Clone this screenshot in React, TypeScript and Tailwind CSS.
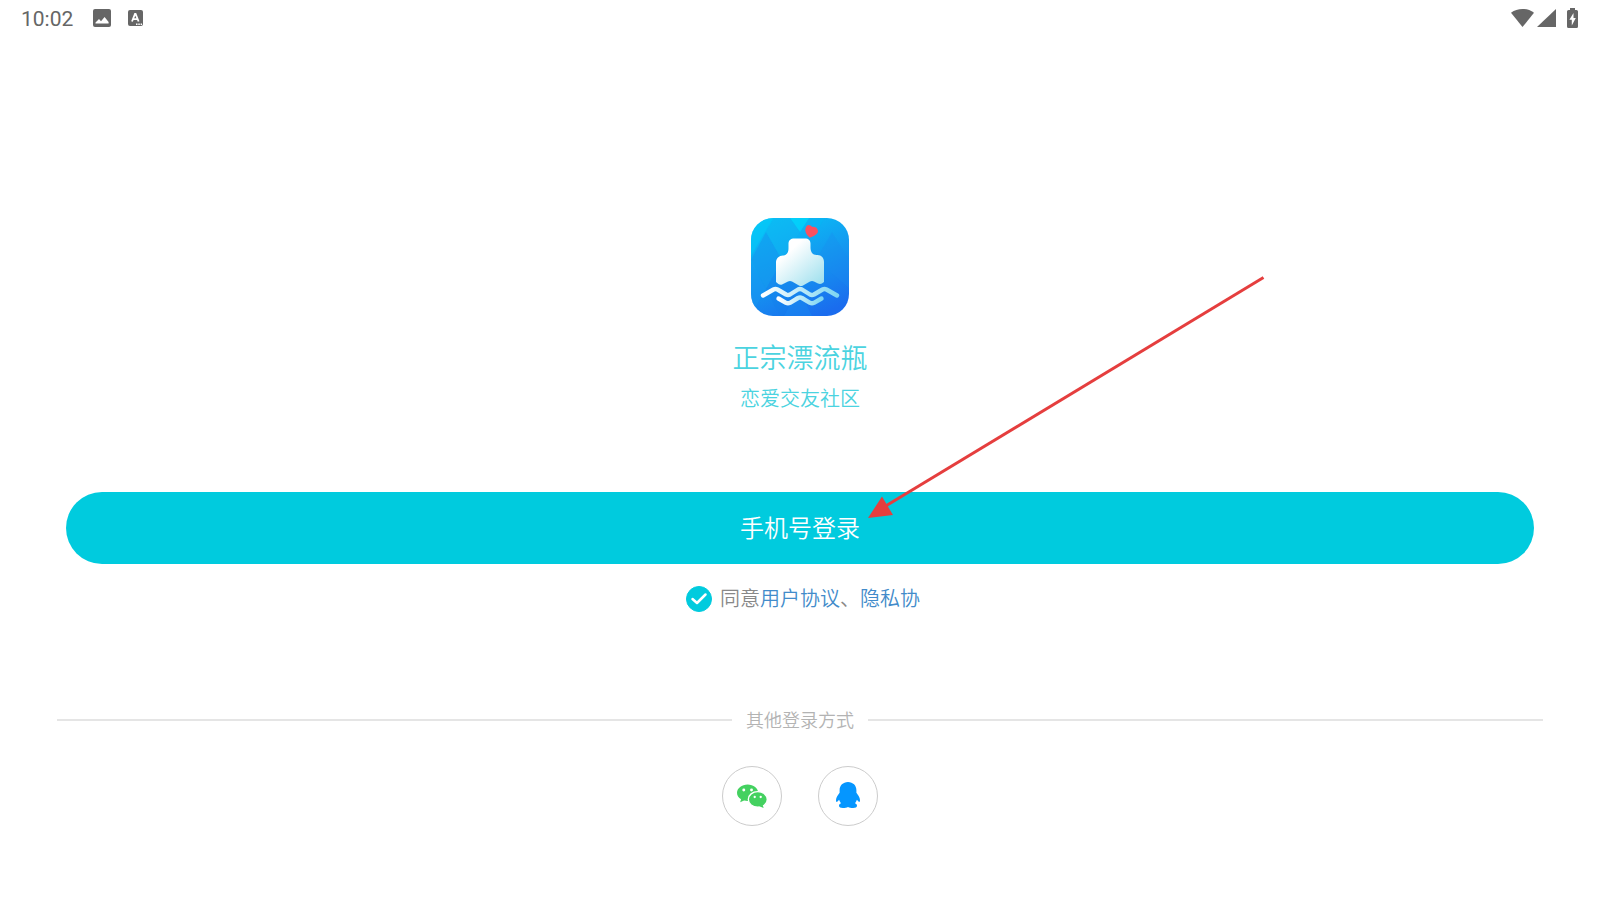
import { useState } from 'react';

function StatusBar() {
  return (
    <header className="flex h-9 items-center justify-between pl-[21px] pr-[22px] text-[#666666]">
      <div className="flex items-center">
        <span className="w-[55px] pt-0.5 font-[Roboto,sans-serif] text-[21px] font-normal leading-6">10:02</span>
        <svg className="ml-[17px] h-[18px] w-[18px]" viewBox="0 0 18 18" aria-hidden="true">
          <rect width="18" height="18" rx="2" fill="currentColor" />
          <path d="M2.5 14.5v-1l3.5-3.5 2 2.2 3.6-4.2 4 5v1.5z" fill="#fff" />
        </svg>
        <svg className="ml-[17px] h-4 w-[15px]" viewBox="0 0 15 16" aria-hidden="true">
          <rect width="15" height="16" rx="2" fill="currentColor" />
          <path
            d="M4 11.5 7 3.8h.6l3 7.7M5.2 9.2h4.2"
            fill="none"
            stroke="#fff"
            strokeWidth="1.8"
          />
          <path d="M8 14.3h1.5M10.3 14.3h1.5M12.6 14.3H14" stroke="#fff" strokeWidth="1.4" />
        </svg>
      </div>
      <div className="flex items-center">
        <svg className="h-[18px] w-[23px]" viewBox="0 0 23 18" aria-hidden="true">
          <path d="M0 3.8C3.4 1.2 7.2 0 11.5 0S19.6 1.2 23 3.8L11.5 18z" fill="currentColor" />
        </svg>
        <svg className="ml-[3px] h-[18px] w-[19px]" viewBox="0 0 19 18" aria-hidden="true">
          <path d="M0 18 19 0v18z" fill="currentColor" />
        </svg>
        <svg className="ml-[11px] h-5 w-[11px]" viewBox="0 0 11 20" aria-hidden="true">
          <path
            d="M3 0h5v2h1.5A1.5 1.5 0 0 1 11 3.5v15A1.5 1.5 0 0 1 9.5 20h-8A1.5 1.5 0 0 1 0 18.5v-15A1.5 1.5 0 0 1 1.5 2H3z"
            fill="currentColor"
          />
          <path d="M6.5 5 2.4 11.8h2.4V17.5L8.800 10H6.500z" fill="#fff" />
        </svg>
      </div>
    </header>
  );
}

function AppLogo() {
  return (
    <svg className="h-[98px] w-[98px]" viewBox="0 0 98 98" role="img" aria-label="正宗漂流瓶">
      <defs>
        <linearGradient id="sea" x1="0.25" y1="0" x2="0.7" y2="1">
          <stop offset="0" stopColor="#08c2f6" />
          <stop offset="0.5" stopColor="#1498f0" />
          <stop offset="1" stopColor="#1a6cee" />
        </linearGradient>
        <linearGradient id="glass" x1="0.1" y1="0.1" x2="0.9" y2="1">
          <stop offset="0.2" stopColor="#ffffff" />
          <stop offset="1" stopColor="#9fe0ee" />
        </linearGradient>
        <linearGradient id="wave" x1="0" y1="0" x2="1" y2="0">
          <stop offset="0" stopColor="#ffffff" />
          <stop offset="1" stopColor="#7fd6f2" />
        </linearGradient>
        <clipPath id="tile">
          <rect width="98" height="98" rx="22" />
        </clipPath>
      </defs>
      <g clipPath="url(#tile)">
        <rect width="98" height="98" fill="url(#sea)" />
        <path d="M0 0h22L0 38z" fill="#05c8f8" opacity="0.6" />
        <path d="m15 14 16 28-16 29L0 42z" fill="#1498ee" opacity="0.6" />
        <path d="M39 0h19l-9 14z" fill="#00d8fc" opacity="0.7" />
        <path d="M15 14 23 0h16l10 14-18 28z" fill="#10b4f2" opacity="0.5" />
        <path d="M65 14 58 0h16z" fill="#08b6f4" opacity="0.5" />
        <path d="m81 14 17 28v28L65 42z" fill="#1a8cf0" opacity="0.3" />
        <path d="M0 44 15 71 0 97z" fill="#1596f2" opacity="0.5" />
        <path d="m15 71 16-29 17 29-16 27H29z" fill="#1580ec" opacity="0.4" />
        <path d="m48 71-15 27h28z" fill="#188cf0" opacity="0.4" />
      </g>
      <path
        d="M44 20.5h10c3.500 0 5.500 2 5.500 5v4c0 4.500 2 7.500 6 7.500h1c4 0 6.500 3 6.500 7V64c-2 2-4 2.500-6 1.500l-4-2q-2-1-4 0l-7 4q-2 1-4 0l-7-4q-2-1-4 0l-6 3c-2 .8-4-.5-6-2.500V44.500c0-4 3-7 7-7 3.500 0 5.500-3 5.500-7v-5c0-3 2-5 6-5z"
        fill="url(#glass)"
      />
      <g fill="none" stroke="url(#wave)" strokeWidth="4.400" strokeLinecap="round" strokeLinejoin="round">
        <path d="m12 77.500 10.500-6q2-1 4 0l8.500 5q2 1 4 0l8-5q2-1 4 0l8 5q2 1 4 0l8.500-5q2-1 4 0L86 77.500" />
        <path d="m27.500 80.500 7.500 4.300q2 1 4 0l8-4.800q2-1 4 0l8 4.800q2 1 4 0l7.500-4.300" />
      </g>
      <path
        d="M55.500 9.500c1-2.200 4.200-2.200 5.200.2 2.600-.4 5 .8 5.500 3.300.3 1.900-1.800 3.600-7.200 5.800-3.500-2.300-4.800-6.500-3.500-9.300z"
        fill="#fb505f"
        stroke="#fb505f"
        strokeWidth="1.500"
        strokeLinejoin="round"
      />
    </svg>
  );
}

function WechatIcon() {
  return (
    <svg className="h-[25px] w-[30px]" viewBox="0 0 31 25" aria-hidden="true">
      <path
        d="M11 0C4.900 0 0 3.800 0 8.700c0 2.700 1.600 5.100 4.200 6.700L3.300 18.500l4-1.800c1.200.3 2.400.5 3.700.5 6 0 11-3.800 11-8.500S17 0 11 0z"
        fill="#44d160"
      />
      <ellipse cx="21.500" cy="15.500" rx="9.800" ry="8.100" fill="#44d160" stroke="#fff" strokeWidth="1.400" />
      <path d="m23 22.500 4.500 2L26.500 21z" fill="#44d160" />
      <g fill="#fff">
        <circle cx="7" cy="5.800" r="1.500" />
        <circle cx="15" cy="5.800" r="1.500" />
        <circle cx="18.300" cy="13" r="1.200" />
        <circle cx="24.500" cy="13" r="1.200" />
      </g>
    </svg>
  );
}

function QQIcon() {
  return (
    <svg className="mb-0.5 h-[26px] w-6" viewBox="0 0 24 26" aria-hidden="true">
      <path
        d="M12 0C7 0 3.600 3.600 3.600 8.200v2.600C2.400 12.500 0 15.500 0 18c0 1.800.6 2.300 1.200 1.700.7-.6 1.400-1.200 1.900-1.900.4 1.300 1 2.400 1.900 3.400-1.300.6-2 1.500-2 2.600C3 25.500 4.600 26 6.800 26c2.200 0 3.900-.4 5.200-1 1.300.6 3 1 5.200 1 2.200 0 3.800-.5 3.800-2.200 0-1.100-.7-2-2-2.600.9-1 1.500-2.100 1.900-3.400.5.700 1.200 1.300 1.900 1.900.6.600 1.200.1 1.200-1.700 0-2.500-2.400-5.500-3.600-7.200V8.200C20.400 3.600 17 0 12 0z"
        fill="#0596ff"
      />
    </svg>
  );
}

function Agreement() {
  const [agreed, setAgreed] = useState(true);

  return (
    <div className="mt-5 flex items-center justify-center pl-1.5 text-xl leading-7 text-[#888888]">
      <span className="relative mt-0.5 h-[26px] w-[26px]">
        <input
          id="agree"
          type="checkbox"
          checked={agreed}
          onChange={(e) => setAgreed(e.target.checked)}
          className="block h-[26px] w-[26px] appearance-none rounded-full border border-[#00cbde] checked:bg-[#00cbde]"
        />
        <svg
          className="pointer-events-none absolute inset-0"
          viewBox="0 0 26 26"
          fill="none"
          stroke="#fff"
          strokeWidth="2.5"
          strokeLinecap="round"
          strokeLinejoin="round"
          aria-hidden="true"
        >
          <path d="m6.500 13 4.500 4 8.500-8.500" />
        </svg>
      </span>
      <label htmlFor="agree" className="ml-2">同意</label>
      <a href="#terms" className="text-[#428bca]">用户协议</a>
      <span>、</span>
      <a href="#privacy" className="text-[#428bca]">隐私协</a>
    </div>
  );
}

export default function App() {
  return (
    <div className="relative min-h-screen overflow-hidden bg-white font-['Noto_Sans_CJK_SC',sans-serif] font-[350]">
      <StatusBar />

      <main className="flex flex-col pt-[182px]">
        <div className="flex flex-col items-center text-[#4bd3e0]">
          <AppLogo />
          <h1 className="mt-[21px] text-[27px] font-[350] leading-10">正宗漂流瓶</h1>
          <p className="mt-[7px] text-xl leading-7">恋爱交友社区</p>
        </div>

        <button
          type="button"
          className="mx-[66px] mt-20 h-[72px] rounded-full bg-[#00cbde] pb-0.5 text-2xl text-white"
        >
          手机号登录
        </button>

        <Agreement />

        {/* Other sign-in methods */}
        <div className="mx-[57px] mt-[94px] flex items-center gap-3.5">
          <span className="h-0.5 flex-1 bg-[#e5e5e5]" />
          <h2 className="pb-0.5 text-lg leading-[26px] text-[#b3b3b3]">其他登录方式</h2>
          <span className="h-0.5 flex-1 bg-[#e5e5e5]" />
        </div>
        <div className="mt-8 flex justify-center gap-9">
          <button
            type="button"
            aria-label="微信登录"
            className="flex h-[60px] w-[60px] items-center justify-center rounded-full border border-[#cccccc]"
          >
            <WechatIcon />
          </button>
          <button
            type="button"
            aria-label="QQ登录"
            className="flex h-[60px] w-[60px] items-center justify-center rounded-full border border-[#cccccc]"
          >
            <QQIcon />
          </button>
        </div>
      </main>

      {/* Pointer to the phone sign-in button */}
      <svg
        className="pointer-events-none absolute left-1/2 top-[270px] ml-[60px] h-[260px] w-[410px]"
        viewBox="0 0 410 260"
        aria-hidden="true"
      >
        <path d="M403.500 7.500 24 237" stroke="#e53e3e" strokeWidth="3" />
        <path d="M8 248 22 226.500 33 245z" fill="#e53e3e" />
      </svg>
    </div>
  );
}
